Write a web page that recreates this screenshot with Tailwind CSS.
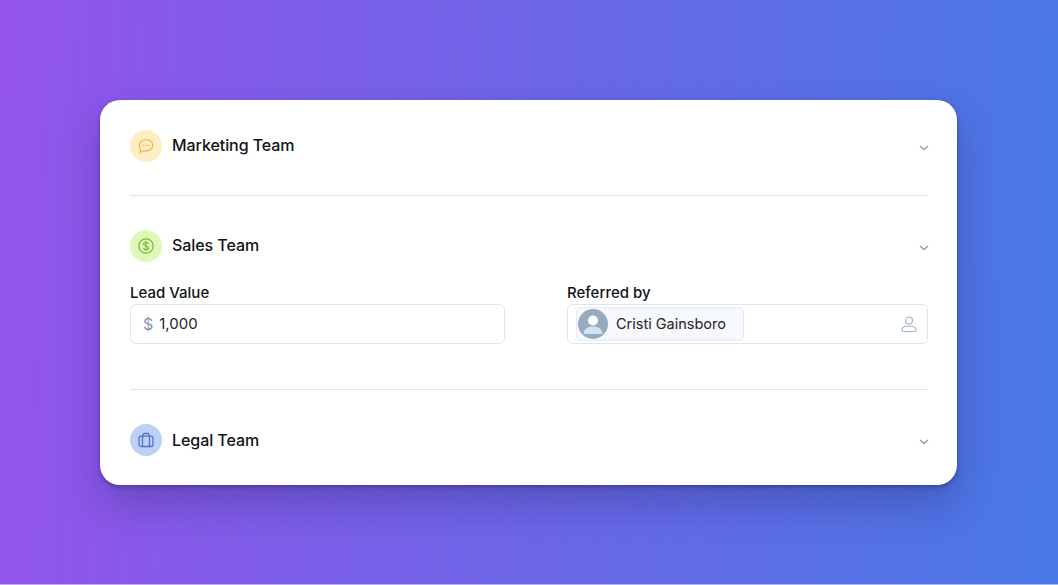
<!doctype html>
<html>
<head>
<meta charset="utf-8">
<script src="https://cdn.jsdelivr.net/npm/@tailwindcss/browser@4"></script>
</head>
<body class="m-0">
<div class="h-[585px] w-full overflow-hidden bg-[linear-gradient(92deg,#9354ea_0%,#4878e5_100%)] font-['Inter',sans-serif]">
<div class="h-[584px] w-full pt-[100px] pl-[100px]">
  <div class="w-[857px] h-[385px] bg-white rounded-[20px] pt-[30px] pl-[30px] pr-[29px] shadow-[0_20px_40px_rgba(30,30,90,0.28),0_2px_4px_rgba(30,30,90,0.4)]">
    <section class="h-[65px]">
      <div class="flex items-center h-[32px]">
        <div class="w-8 h-8 rounded-full bg-[#fdeec4] flex items-center justify-center">
          <svg width="16" height="16" viewBox="0 0 16 16" fill="none" stroke="#edb551" stroke-width="1.300"><path d="M8 1.700c3.700 0 6.700 2.500 6.700 5.700S11.700 13 8 13c-.8 0-1.500-.1-2.200-.3L1.900 14.500l.7-3.600C1.700 9.900 1.300 8.700 1.300 7.400 1.300 4.200 4.300 1.700 8 1.700z" stroke-linejoin="round"/><circle cx="5.300" cy="7.400" r=".8" fill="#edb551" stroke="none"/><circle cx="8" cy="7.400" r=".8" fill="#edb551" stroke="none"/><circle cx="10.700" cy="7.400" r=".8" fill="#edb551" stroke="none"/></svg>
        </div>
        <span class="ml-[10px] -mt-[2px] text-[16px] leading-[20px] font-medium tracking-[-0.07px] text-[#111318]">Marketing Team</span>
        <svg class="ml-auto mr-[-1px] mt-[3px]" width="10" height="6" viewBox="0 0 10 6" fill="none" stroke="#8ba3bd" stroke-width="1.500"><path d="M1 1l4 3.600L9 1"/></svg>
      </div>
    </section>
    <div class="h-px bg-[#dde5ec]"></div>
    <section class="pt-[34px] h-[193px]">
      <div class="flex items-center h-[32px]">
        <div class="w-8 h-8 rounded-full bg-[#dff7b9] flex items-center justify-center">
          <svg width="18" height="18" viewBox="0 0 18 18" fill="none" stroke="#7cb63a" stroke-width="1.200"><circle cx="9" cy="9" r="7.200"/><path d="M11.300 6.700C11 5.800 10.100 5.300 9 5.300c-1.300 0-2.400.7-2.400 1.800 0 2.500 4.900 1.300 4.900 3.800 0 1.100-1.100 1.800-2.500 1.800-1.200 0-2.200-.6-2.500-1.500M9 4.200v9.600"/></svg>
        </div>
        <span class="ml-[10px] -mt-[2px] text-[16px] leading-[20px] font-medium tracking-[-0.07px] text-[#111318]">Sales Team</span>
        <svg class="ml-auto mr-[-1px] mt-[3px]" width="10" height="6" viewBox="0 0 10 6" fill="none" stroke="#8ba3bd" stroke-width="1.500"><path d="M1 1l4 3.600L9 1"/></svg>
      </div>
      <div class="flex mt-[21px]">
        <div class="w-[375px]">
          <div class="text-[15px] leading-[20px] h-[21px] font-medium text-[#111318]">Lead Value</div>
          <div class="h-10 rounded-[6px] border border-[#dbe5f0] flex items-center pl-[12px] text-[15px]">
            <span class="text-[#7f97b2] text-[16px] -mt-[1px]">$</span>
            <span class="ml-[6px] mt-[1px] text-[#1f2328]">1,000</span>
          </div>
        </div>
        <div class="w-[361px] ml-[62px]">
          <div class="text-[15px] leading-[20px] h-[21px] font-medium text-[#111318]">Referred by</div>
          <div class="h-10 rounded-[6px] border border-[#dbe5f0] flex items-center pl-[8px] pr-[9px]">
            <div class="h-[34px] w-[168px] rounded-[6px] border border-[#e3eaf2] bg-[#f6f8fb] flex items-center pl-[1px]">
              <div class="w-[30px] h-[30px] rounded-full bg-[#98abbd] overflow-hidden flex-none">
                <svg width="30" height="30" viewBox="0 0 30 30"><circle cx="15" cy="11.500" r="5" fill="#fff"/><path d="M5.500 25c.5-5 4-7.500 9.500-7.500S24 20 24.500 25z" fill="#cfe4f3"/></svg>
              </div>
              <span class="ml-[8px] text-[14.5px] text-[#1f2328]">Cristi Gainsboro</span>
            </div>
            <svg class="ml-auto" width="18" height="18" viewBox="0 0 18 18" fill="none" stroke="#9db0c4" stroke-width="1.100"><circle cx="9" cy="5.500" r="3.500"/><path d="M2 15c0-2.500 3-4 7-4s7 1.500 7 4c0 1-.8 1.500-1.500 1.500h-11C2.800 16.500 2 16 2 15z"/></svg>
          </div>
        </div>
      </div>
    </section>
    <div class="h-px bg-[#dde5ec]"></div>
    <section class="pt-[34px]">
      <div class="flex items-center h-[32px]">
        <div class="w-8 h-8 rounded-full bg-[#bdd0f7] flex items-center justify-center">
          <svg width="16" height="16" viewBox="0 0 16 16" fill="none" stroke="#5270c4" stroke-width="1.300"><rect x="1" y="4.200" width="14" height="10.300" rx="2"/><path d="M5 4.200V2.800C5 2 5.500 1.500 6.300 1.500h3.400c.8 0 1.300.5 1.300 1.300v1.400M4.500 4.200v10.300M11.500 4.200v10.300"/></svg>
        </div>
        <span class="ml-[10px] text-[16px] leading-[20px] font-medium tracking-[-0.07px] text-[#111318]">Legal Team</span>
        <svg class="ml-auto mr-[-1px] mt-[3px]" width="10" height="6" viewBox="0 0 10 6" fill="none" stroke="#8ba3bd" stroke-width="1.500"><path d="M1 1l4 3.600L9 1"/></svg>
      </div>
    </section>
  </div>
</div>
<div class="h-px w-full bg-white/50"></div>
</div>
</body>
</html>
